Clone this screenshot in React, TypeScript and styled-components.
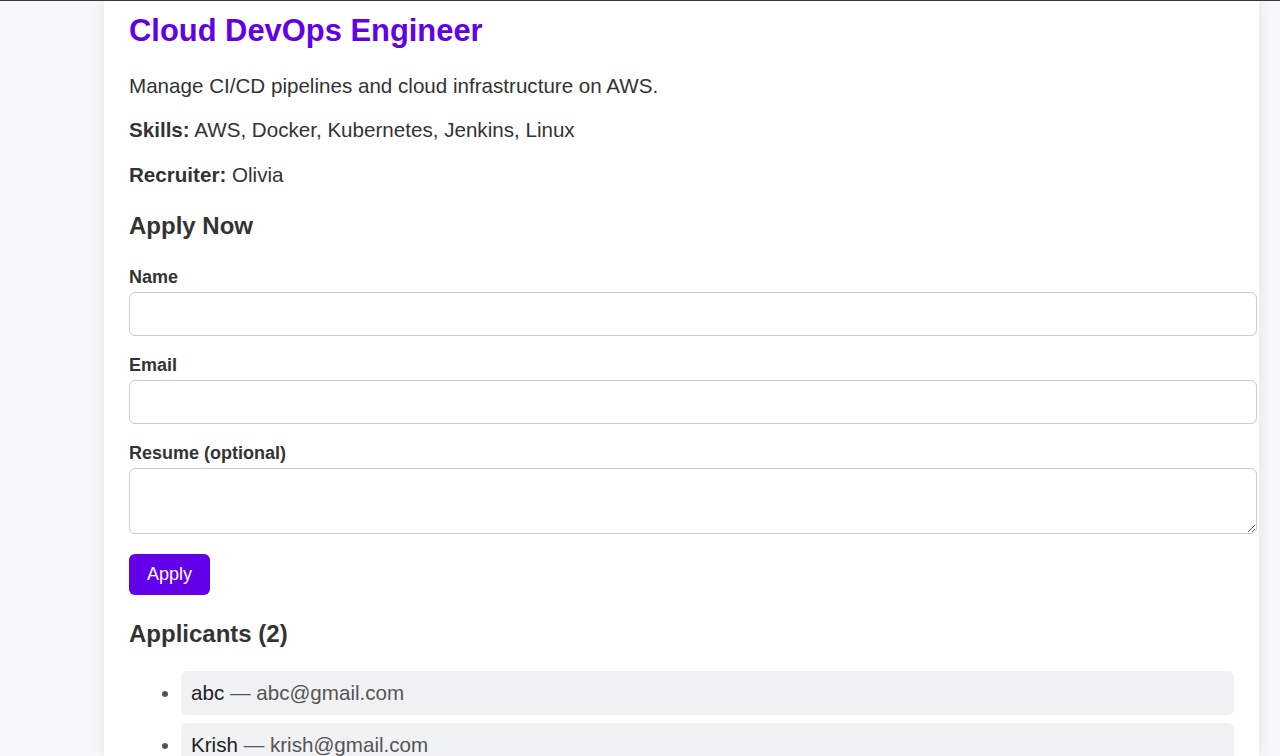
import { FC } from 'react';
import styled, { createGlobalStyle } from 'styled-components';

const GlobalStyle = createGlobalStyle`
  html, body {
    margin: 0;
    padding: 0;
    background: #f7f8fa;
    font-family: "Liberation Sans", Arial, sans-serif;
    color: #333;
    overflow: hidden;
  }
`;

const TopRule = styled.div`
  height: 1px;
  background: #3a3a3a;
`;

const Page = styled.div`
  display: flex;
  padding-left: 104px;
  height: 755px;
`;

const Card = styled.main`
  width: 1155px;
  box-sizing: border-box;
  background: #fff;
  padding: 12px 25px 0;
  box-shadow: 0 0 14px rgba(0, 0, 0, 0.09);
`;

const Title = styled.h1`
  margin: 0 0 25px;
  font-size: 30.9px;
  line-height: 36px;
  font-weight: 700;
  color: #6200ea;
`;

const Text = styled.p`
  margin: 20.4px 0;
  font-size: 20.6px;
  line-height: 24px;
  &:first-of-type {
    margin-top: 0;
  }
`;

const SectionTitle = styled.h3<{ $top?: number; $bottom?: number }>`
  margin: ${p => p.$top ?? 25}px 0 ${p => p.$bottom ?? 27.5}px;
  font-size: 24px;
  line-height: 28px;
  font-weight: 700;
  color: #333;
`;

const Form = styled.form`
  display: flex;
  flex-direction: column;
  align-items: flex-start;
`;

const Field = styled.div`
  display: flex;
  flex-direction: column;
  width: 100%;
  margin-bottom: 19px;

  &:last-of-type {
    margin-bottom: 17.5px;
  }
`;

const Label = styled.label`
  font-size: 18px;
  line-height: 21px;
  font-weight: 700;
  margin-bottom: 4px;
`;

const Input = styled.input`
  box-sizing: border-box;
  width: calc(100% + 23px);
  height: 44px;
  border: 1px solid #ccc;
  border-radius: 6px;
  padding: 0 10px;
  font: inherit;
  font-size: 18px;
  background: #fff;
  outline: none;
`;

const TextArea = styled.textarea`
  box-sizing: border-box;
  width: calc(100% + 23px);
  height: 66px;
  border: 1px solid #ccc;
  border-radius: 6px;
  padding: 10px;
  font: inherit;
  font-size: 18px;
  display: block;
  outline: none;
`;

const Button = styled.button`
  margin-top: 2.5px;
  height: 41px;
  padding: 0 18px;
  border: none;
  border-radius: 6px;
  background: #6200ea;
  color: #fff;
  font-family: inherit;
  font-size: 18px;
  cursor: pointer;
`;

const List = styled.ul`
  margin: 0;
  padding-left: 52px;
`;

const Item = styled.li`
  background: #f1f2f4;
  border-radius: 6px;
  padding: 10px;
  margin-bottom: 8px;
  font-size: 20.6px;
  line-height: 24px;
  color: #555;
`;

const Name = styled.span`
  color: #222;
`;

const applicants = [
  { name: 'abc', email: 'abc@gmail.com' },
  { name: 'Krish', email: 'krish@gmail.com' },
];

const App: FC = () => (
  <>
    <GlobalStyle />
    <TopRule />
    <Page>
      <Card>
        <Title>Cloud DevOps Engineer</Title>
        <Text>Manage CI/CD pipelines and cloud infrastructure on AWS.</Text>
        <Text><strong>Skills:</strong> AWS, Docker, Kubernetes, Jenkins, Linux</Text>
        <Text><strong>Recruiter:</strong> Olivia</Text>

        <SectionTitle>Apply Now</SectionTitle>
        <Form onSubmit={e => e.preventDefault()}>
          <Field>
            <Label>Name</Label>
            <Input type="text" />
          </Field>
          <Field>
            <Label>Email</Label>
            <Input type="email" />
          </Field>
          <Field>
            <Label>Resume (optional)</Label>
            <TextArea />
          </Field>
          <Button type="submit">Apply</Button>
        </Form>

        <SectionTitle $top={25} $bottom={23}>Applicants ({applicants.length})</SectionTitle>
        <List>
          {applicants.map(a => (
            <Item key={a.email}>
              <Name>{a.name}</Name> — {a.email}
            </Item>
          ))}
        </List>
      </Card>
    </Page>
  </>
);

export default App;
